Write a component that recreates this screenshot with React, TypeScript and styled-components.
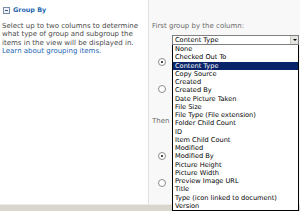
import React from 'react';
import styled, { createGlobalStyle } from 'styled-components';

const GlobalStyle = createGlobalStyle`
  html, body {
    margin: 0;
    padding: 0;
    background: #ffffff;
  }
  body {
    font-family: "DejaVu Sans", Tahoma, sans-serif;
  }
`;

const columns = [
  'None',
  'Checked Out To',
  'Content Type',
  'Copy Source',
  'Created',
  'Created By',
  'Date Picture Taken',
  'File Size',
  'File Type (File extension)',
  'Folder Child Count',
  'ID',
  'Item Child Count',
  'Modified',
  'Modified By',
  'Picture Height',
  'Picture Width',
  'Preview Image URL',
  'Title',
  'Type (icon linked to document)',
  'Version',
];

const Page = styled.div`
  position: relative;
  width: 300px;
  height: 211px;
  overflow: hidden;
  display: flex;
  flex-direction: column;
  font-size: 7px;
`;

const Main = styled.div`
  flex: 1;
  display: flex;
`;

const Description = styled.div`
  width: 149px;
  border-right: 1px solid #e2e2e2;
  background: #ffffff;
  padding: 6px 0 0 2px;
  box-sizing: border-box;
`;

const SectionTitle = styled.div`
  display: flex;
  align-items: center;
  gap: 3px;
  padding-left: 1px;
  color: #2466b3;
  font-weight: bold;
  font-size: 6.4px;
  height: 8px;
`;

const CollapseIcon = styled.span`
  width: 5px;
  height: 5px;
  border: 1px solid #7a8da8;
  background: #eef2f8;
  position: relative;
  &::after {
    content: '';
    position: absolute;
    left: 1px;
    right: 1px;
    top: 2px;
    height: 1px;
    background: #3d5a86;
  }
`;

const Help = styled.p`
  margin: 8px 0 0;
  color: #4a4a4a;
  line-height: 8.3px;
`;

const HelpLink = styled.a`
  color: #2466b3;
  text-decoration: none;
`;

const Options = styled.div`
  flex: 1;
  background: #f8f8f8;
  padding: 22px 0 0 3px;
  color: #6b6b6b;
`;

const FieldLabel = styled.div`
  line-height: 8px;
  white-space: nowrap;
`;

const Select = styled.div<{ gap: number }>`
  margin: ${p => p.gap}px 0 0 20px;
  width: 127px;
  height: 10px;
  box-sizing: border-box;
  border: 1px solid #7f7f7f;
  background: #ffffff;
  color: #000000;
  font-size: 6.6px;
  display: flex;
  align-items: center;
  padding-left: 2px;
`;

const SelectText = styled.span`
  flex: 1;
  line-height: 8px;
`;

const ArrowButton = styled.span`
  width: 7px;
  height: 8px;
  background: #e6e4df;
  border-left: 1px solid #c9c6bf;
  display: flex;
  align-items: center;
  justify-content: center;
`;

const Arrow = styled.span`
  width: 0;
  height: 0;
  border-left: 2px solid transparent;
  border-right: 2px solid transparent;
  border-top: 2px solid #000000;
`;

const RadioGroup = styled.div<{ gap: number }>`
  display: flex;
  flex-direction: column;
  gap: 19px;
  margin: ${p => p.gap}px 0 0 6px;
`;

const Radio = styled.span<{ checked?: boolean }>`
  width: 6px;
  height: 6px;
  border-radius: 50%;
  border: 1px solid #8d8d8d;
  background: #ffffff;
  display: flex;
  align-items: center;
  justify-content: center;
  &::after {
    content: '';
    width: 2px;
    height: 2px;
    border-radius: 50%;
    background: ${p => (p.checked ? '#111111' : 'transparent')};
  }
`;

const ThenLabel = styled(FieldLabel)`
  margin-top: 24px;
`;

const StatusBar = styled.div`
  height: 6px;
  border-top: 1px solid #ecebe8;
  background: #d9d6d0;
`;

const ListBox = styled.ul`
  position: absolute;
  left: 172px;
  top: 45px;
  width: 127px;
  margin: 0;
  padding: 0;
  list-style: none;
  box-sizing: border-box;
  border: 1px solid #000000;
  border-top: none;
  background: #ffffff;
  font-size: 6.6px;
`;

const Option = styled.li<{ selected?: boolean }>`
  height: 8.25px;
  line-height: 8.25px;
  padding-left: 2px;
  white-space: nowrap;
  color: ${p => (p.selected ? '#ffffff' : '#000000')};
  background: ${p => (p.selected ? '#0a246a' : 'transparent')};
`;

function OrderRadios({ gap }: { gap: number }) {
  return (
    <RadioGroup gap={gap} role="radiogroup">
      <Radio checked role="radio" aria-checked="true" aria-label="Show groups in ascending order" />
      <Radio role="radio" aria-checked="false" aria-label="Show groups in descending order" />
    </RadioGroup>
  );
}

export default function App() {
  return (
    <Page>
      <GlobalStyle />
      <Main>
        <Description>
          <SectionTitle>
            <CollapseIcon />
            Group By
          </SectionTitle>
          <Help>
            Select up to two columns to determine what type of group and subgroup the items in the view will be
            displayed in. <HelpLink href="#">Learn about grouping items.</HelpLink>
          </Help>
        </Description>
        <Options>
          <FieldLabel>First group by the column:</FieldLabel>
          <Select gap={5}>
            <SelectText>Content Type</SelectText>
            <ArrowButton>
              <Arrow />
            </ArrowButton>
          </Select>
          <OrderRadios gap={13} />
          <ThenLabel>Then group by the column:</ThenLabel>
          <Select gap={3}>
            <SelectText>None</SelectText>
            <ArrowButton>
              <Arrow />
            </ArrowButton>
          </Select>
          <OrderRadios gap={14} />
        </Options>
      </Main>
      <StatusBar />
      <ListBox>
        {columns.map(name => (
          <Option key={name} selected={name === 'Content Type'}>
            {name}
          </Option>
        ))}
      </ListBox>
    </Page>
  );
}
